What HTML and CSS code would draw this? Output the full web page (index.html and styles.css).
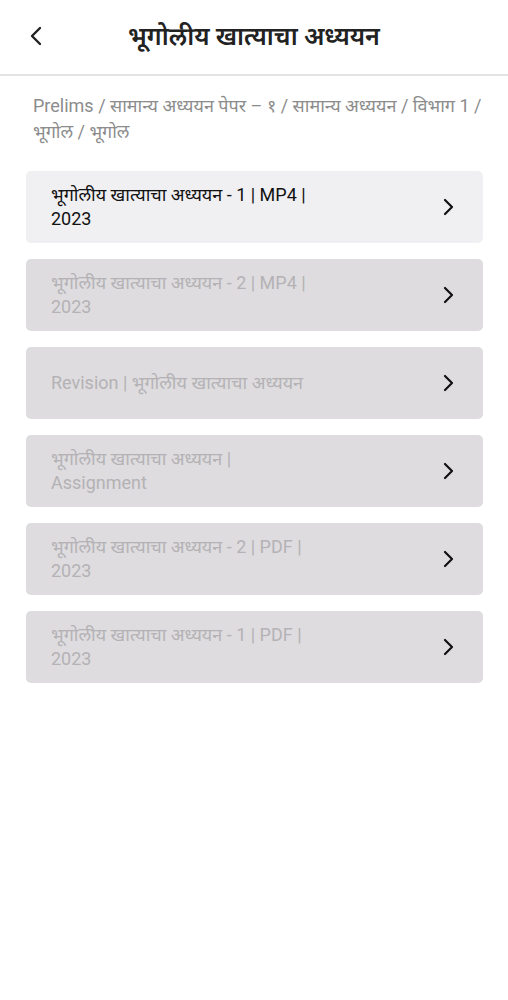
FILE: index.html
```html
<!DOCTYPE html>
<html lang="mr">
<head>
<meta charset="utf-8">
<title>भूगोलीय खात्याचा अध्ययन</title>
<link rel="stylesheet" href="styles.css">
</head>
<body>
<header class="topbar">
  <span class="back">
    <svg width="14" height="20" viewBox="0 0 14 20"><path d="M11 2 L3 10 L11 18" fill="none" stroke="#222" stroke-width="2.4" stroke-linecap="round" stroke-linejoin="round"/></svg>
  </span>
  <h1 class="title">भूगोलीय खात्याचा अध्ययन</h1>
  <span class="spacer"></span>
</header>
<main class="content">
  <p class="crumbs">Prelims / सामान्य अध्ययन पेपर – १ / सामान्य अध्ययन / विभाग 1 / भूगोल / भूगोल</p>
  <ul class="list">
    <li class="item active"><span class="label">भूगोलीय खात्याचा अध्ययन - 1 | MP4 | 2023</span><svg class="chev" width="14" height="20" viewBox="0 0 14 20"><path d="M4 3 L11 10 L4 17" fill="none" stroke="#111" stroke-width="2.2" stroke-linecap="round" stroke-linejoin="round"/></svg></li>
    <li class="item"><span class="label">भूगोलीय खात्याचा अध्ययन - 2 | MP4 | 2023</span><svg class="chev" width="14" height="20" viewBox="0 0 14 20"><path d="M4 3 L11 10 L4 17" fill="none" stroke="#111" stroke-width="2.2" stroke-linecap="round" stroke-linejoin="round"/></svg></li>
    <li class="item"><span class="label">Revision | भूगोलीय खात्याचा अध्ययन</span><svg class="chev" width="14" height="20" viewBox="0 0 14 20"><path d="M4 3 L11 10 L4 17" fill="none" stroke="#111" stroke-width="2.2" stroke-linecap="round" stroke-linejoin="round"/></svg></li>
    <li class="item"><span class="label">भूगोलीय खात्याचा अध्ययन | Assignment</span><svg class="chev" width="14" height="20" viewBox="0 0 14 20"><path d="M4 3 L11 10 L4 17" fill="none" stroke="#111" stroke-width="2.2" stroke-linecap="round" stroke-linejoin="round"/></svg></li>
    <li class="item"><span class="label">भूगोलीय खात्याचा अध्ययन - 2 | PDF | 2023</span><svg class="chev" width="14" height="20" viewBox="0 0 14 20"><path d="M4 3 L11 10 L4 17" fill="none" stroke="#111" stroke-width="2.2" stroke-linecap="round" stroke-linejoin="round"/></svg></li>
    <li class="item"><span class="label">भूगोलीय खात्याचा अध्ययन - 1 | PDF | 2023</span><svg class="chev" width="14" height="20" viewBox="0 0 14 20"><path d="M4 3 L11 10 L4 17" fill="none" stroke="#111" stroke-width="2.2" stroke-linecap="round" stroke-linejoin="round"/></svg></li>
  </ul>
</main>
</body>
</html>
```
FILE: styles.css
```css
* { box-sizing: border-box; }
html, body { margin: 0; padding: 0; background: #fff; }
body { font-family: Roboto, "Noto Sans", "DejaVu Sans", sans-serif; color: #111; }
.topbar {
  height: 76px;
  border-bottom: 2px solid #e4e4e4;
  display: flex;
  align-items: center;
  padding: 0 29px;
}
.back, .spacer { display: flex; width: 40px; flex: none; }
.back { margin-top: -2px; }
.title {
  flex: 1;
  margin: -4px 0 0;
  font-size: 25px;
  font-weight: 600;
  color: #222;
  text-align: center;
}
.content { padding: 0 25px 0 26px; }
.crumbs {
  margin: 17px 0 0 7px;
  font-size: 18px;
  line-height: 26px;
  color: #8c8c8c;
}
.list { list-style: none; margin: 26px 0 0; padding: 0; display: flex; flex-direction: column; gap: 16px; }
.item {
  min-height: 72px;
  border-radius: 5px;
  background: #dedcdf;
  display: flex;
  align-items: center;
  justify-content: space-between;
  padding: 0 28px 0 25px;
}
.item.active { background: #f0eff1; }
.label {
  max-width: 262px;
  font-size: 18px;
  line-height: 24px;
  color: #b4b2b5;
}
.item.active .label { color: #111; }
.chev { flex: none; }
```
